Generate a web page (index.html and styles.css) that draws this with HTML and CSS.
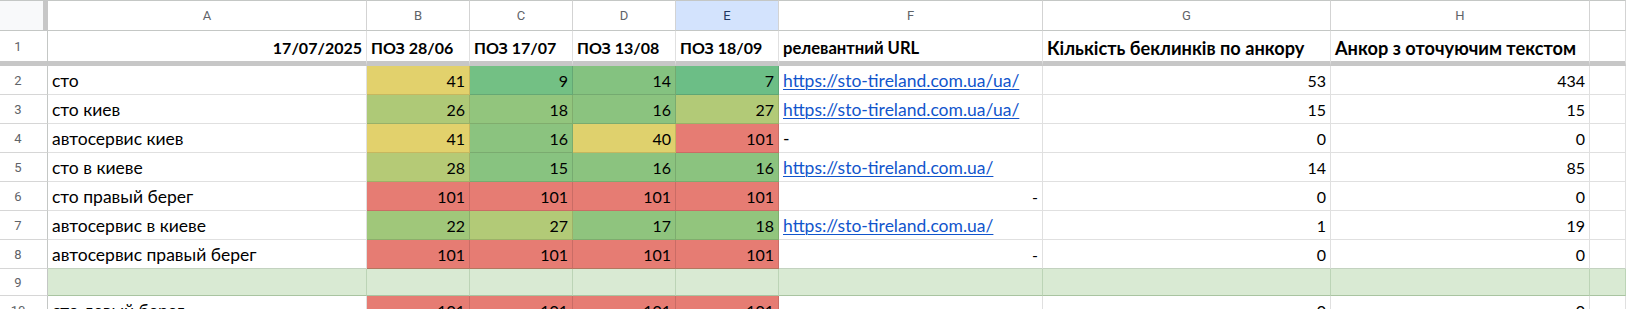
FILE: index.html
```html
<!DOCTYPE html>
<html lang="uk">
<head>
<meta charset="utf-8">
<title>Позиції</title>
<link rel="stylesheet" href="styles.css">
</head>
<body>
<div class="sheet">
  <div class="corner"></div>
  <div class="ch">A</div>
  <div class="ch">B</div>
  <div class="ch">C</div>
  <div class="ch">D</div>
  <div class="ch sel">E</div>
  <div class="ch">F</div>
  <div class="ch">G</div>
  <div class="ch">H</div>
  <div class="ch"></div>

  <div class="rh r1">1</div>
  <div class="c b r1 num">17/07/2025</div>
  <div class="c b r1">ПОЗ 28/06</div>
  <div class="c b r1">ПОЗ 17/07</div>
  <div class="c b r1">ПОЗ 13/08</div>
  <div class="c b r1">ПОЗ 18/09</div>
  <div class="c b r1 hf">релевантний URL</div>
  <div class="c b r1 hw">Кількість беклинків по анкору</div>
  <div class="c b r1 hw">Анкор з оточуючим текстом</div>
  <div class="c r1"></div>

  <div class="rh">2</div>
  <div class="c t">сто</div>
  <div class="c num s41">41</div>
  <div class="c num s9">9</div>
  <div class="c num s14">14</div>
  <div class="c num s7">7</div>
  <div class="c t"><a class="lnk" href="#">https://sto-tireland.com.ua/ua/</a></div>
  <div class="c num">53</div>
  <div class="c num">434</div>
  <div class="c"></div>

  <div class="rh">3</div>
  <div class="c t">сто киев</div>
  <div class="c num s26">26</div>
  <div class="c num s18">18</div>
  <div class="c num s16">16</div>
  <div class="c num s27">27</div>
  <div class="c t"><a class="lnk" href="#">https://sto-tireland.com.ua/ua/</a></div>
  <div class="c num">15</div>
  <div class="c num">15</div>
  <div class="c"></div>

  <div class="rh">4</div>
  <div class="c t">автосервис киев</div>
  <div class="c num s41">41</div>
  <div class="c num s16">16</div>
  <div class="c num s40">40</div>
  <div class="c num s101">101</div>
  <div class="c t">-</div>
  <div class="c num">0</div>
  <div class="c num">0</div>
  <div class="c"></div>

  <div class="rh">5</div>
  <div class="c t">сто в киеве</div>
  <div class="c num s28">28</div>
  <div class="c num s15">15</div>
  <div class="c num s16">16</div>
  <div class="c num s16">16</div>
  <div class="c t"><a class="lnk" href="#">https://sto-tireland.com.ua/</a></div>
  <div class="c num">14</div>
  <div class="c num">85</div>
  <div class="c"></div>

  <div class="rh">6</div>
  <div class="c t">сто правый берег</div>
  <div class="c num s101">101</div>
  <div class="c num s101">101</div>
  <div class="c num s101">101</div>
  <div class="c num s101">101</div>
  <div class="c num">-</div>
  <div class="c num">0</div>
  <div class="c num">0</div>
  <div class="c"></div>

  <div class="rh">7</div>
  <div class="c t">автосервис в киеве</div>
  <div class="c num s22">22</div>
  <div class="c num s27">27</div>
  <div class="c num s17">17</div>
  <div class="c num s18">18</div>
  <div class="c t"><a class="lnk" href="#">https://sto-tireland.com.ua/</a></div>
  <div class="c num">1</div>
  <div class="c num">19</div>
  <div class="c"></div>

  <div class="rh">8</div>
  <div class="c t r8">автосервис правый берег</div>
  <div class="c num s101 r8">101</div>
  <div class="c num s101 r8">101</div>
  <div class="c num s101 r8">101</div>
  <div class="c num s101 r8">101</div>
  <div class="c num r8">-</div>
  <div class="c num r8">0</div>
  <div class="c num r8">0</div>
  <div class="c r8"></div>

  <div class="rh">9</div>
  <div class="c band"></div>
  <div class="c band"></div>
  <div class="c band"></div>
  <div class="c band"></div>
  <div class="c band"></div>
  <div class="c band"></div>
  <div class="c band"></div>
  <div class="c band"></div>
  <div class="c band"></div>

  <div class="rh">10</div>
  <div class="c t">сто левый берег</div>
  <div class="c num s101">101</div>
  <div class="c num s101">101</div>
  <div class="c num s101">101</div>
  <div class="c num s101">101</div>
  <div class="c"></div>
  <div class="c num">0</div>
  <div class="c num">0</div>
  <div class="c"></div>
</div>
</body>
</html>
```

FILE: styles.css
```css
html, body {
  margin: 0;
  padding: 0;
  background: #ffffff;
  overflow: hidden;
}

.sheet {
  display: grid;
  grid-template-columns: 48px 319px 103px 103px 103px 103px 264px 288px 259px 1fr;
  grid-template-rows: 31px 35px repeat(7, 29px) 27px 29px;
  width: 1626px;
  font-family: Lato, "Noto Sans", sans-serif;
  font-size: 16px;
  color: #000000;
}

.sheet > div {
  box-sizing: border-box;
  border-right: 1px solid rgba(0, 0, 0, 0.12);
  border-bottom: 1px solid rgba(0, 0, 0, 0.12);
  white-space: nowrap;
  overflow: hidden;
  display: flex;
}

.corner {
  background: #f8f9fa;
  border-top: 1px solid #c4c7c5;
  border-right: 5px solid #c7c7c7 !important;
  border-bottom-color: #c4c7c5 !important;
}

.ch {
  border-top: 1px solid #c4c7c5;
  border-right-color: #d3d3d3 !important;
  border-bottom-color: #c4c7c5 !important;
  justify-content: center;
  align-items: center;
  font-family: Roboto, "Liberation Sans", sans-serif;
  font-size: 13px;
  color: #5f6368;
}

.ch.sel {
  background: #d3e3fd;
  color: #1f3760;
}

.rh {
  justify-content: center;
  align-items: center;
  padding-right: 11px;
  font-family: Roboto, "Liberation Sans", sans-serif;
  font-size: 13px;
  color: #5f6368;
  border-right-color: #c4c7c5 !important;
  border-bottom-color: #d6d6d6 !important;
}

.c {
  align-items: flex-end;
  padding: 0 4px 3px 4px;
  line-height: 20px;
}

.t {
  font-size: 17.5px;
}

.hf {
  font-size: 16.6px;
}

.hw {
  font-size: 18.2px;
}

.num {
  justify-content: flex-end;
}

.b {
  font-weight: 700;
}

.r1 {
  border-bottom: 5px solid #c7c7c7 !important;
}

.r8 {
  border-bottom-color: rgba(60, 110, 50, 0.3) !important;
}

.band {
  background: #d9ead3;
  border-bottom-color: rgba(60, 110, 50, 0.3) !important;
  border-right-color: rgba(60, 110, 50, 0.18) !important;
}

.lnk {
  color: #1155cc;
  text-decoration: underline;
  text-decoration-thickness: 1px;
  text-underline-offset: 2px;
}

.s7 { background: #6cbe86; }
.s9 { background: #73c084; }
.s14 { background: #84c280; }
.s15 { background: #88c380; }
.s16 { background: #8bc37f; }
.s17 { background: #8fc47e; }
.s18 { background: #92c57d; }
.s22 { background: #a0c77a; }
.s26 { background: #aec977; }
.s27 { background: #b2ca77; }
.s28 { background: #b5ca76; }
.s40 { background: #dfd16d; }
.s41 { background: #e2d16c; }
.s101 { background: #e67c73; }
```
